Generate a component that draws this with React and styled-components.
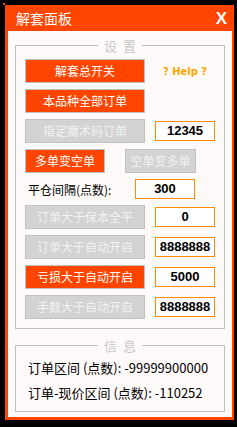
import React from "react";
import styled, { createGlobalStyle } from "styled-components";

const GlobalStyle = createGlobalStyle`
  body {
    margin: 0;
    background: #000;
    font-family: "Noto Sans CJK SC", "Noto Sans", sans-serif;
  }
`;

const Panel = styled.div`
  position: relative;
  box-sizing: border-box;
  margin: 5px 0 0 5px;
  width: 229px;
  height: 415px;
  padding: 0 2px 3px 3px;
  background: #ff4500;
  display: flex;
  flex-direction: column;
  &::before {
    content: "";
    position: absolute;
    left: -2px;
    top: -2px;
    width: 2px;
    height: 2px;
    background: #ff4500;
  }
`;

const TitleBar = styled.div`
  height: 26px;
  display: flex;
  align-items: center;
  justify-content: space-between;
  padding: 0 5px 0 8px;
  color: #fff;
`;

const Title = styled.span`
  font-size: 14px;
  line-height: 26px;
`;

const Close = styled.span`
  font-family: "Liberation Sans", Arial, sans-serif;
  font-weight: bold;
  font-size: 17px;
  line-height: 26px;
  padding-top: 1px;
`;

const Body = styled.div`
  flex: 1;
  background: #fffafa;
  padding: 7px 7px 0;
`;

const Group = styled.fieldset`
  margin: ${(p) => (p.$spaced ? "9px 0 0" : "0")};
  padding: ${(p) => p.$pad};
  border: 1px solid #c0c0c0;
  min-width: 0;
`;

const Legend = styled.legend`
  margin: 0 auto;
  padding: 0 6px;
  font-size: 13px;
  line-height: 15px;
  color: #c8c8c8;
  white-space: pre;
`;

const Stack = styled.div`
  display: flex;
  flex-direction: column;
  gap: 6px;
`;

const Row = styled.div`
  display: flex;
  align-items: center;
  gap: ${(p) => p.$gap || 10}px;
`;

const Button = styled.button`
  box-sizing: border-box;
  width: ${(p) => p.$w || 120}px;
  height: 24px;
  margin: 0;
  padding: 0;
  border: 1px solid #c0c0c0;
  background: ${(p) => (p.$on ? "#ff4500" : "#d3d3d3")};
  color: ${(p) => (p.$on ? "#fff" : "#f2f2f2")};
  font-family: "Noto Sans CJK SC", sans-serif;
  font-size: 12px;
  line-height: 22px;
`;

const Value = styled.div`
  box-sizing: border-box;
  width: 60px;
  height: 20px;
  border: 1px solid #ff8c00;
  background: #fff;
  color: #000;
  font-family: "Liberation Sans", Arial, sans-serif;
  font-weight: bold;
  font-size: 13px;
  line-height: 18px;
  text-align: center;
`;

const Help = styled.span`
  width: 60px;
  text-align: center;
  color: #ffa500;
  font-family: "DejaVu Sans Condensed", "Liberation Sans", sans-serif;
  font-weight: bold;
  font-size: 11px;
`;

const Label = styled.span`
  width: 97px;
  padding-left: 3px;
  font-size: 12px;
  color: #000;
  line-height: 19px;
`;

const Line = styled.div`
  font-size: 13px;
  line-height: 25px;
  color: #000;
`;

const valueRows = [
  { text: "订单大于保本全平", on: false, value: "0" },
  { text: "订单大于自动开启", on: false, value: "8888888" },
  { text: "亏损大于自动开启", on: true, value: "5000" },
  { text: "手数大于自动开启", on: false, value: "8888888" },
];

const App = () => {
  return (
    <>
      <GlobalStyle />
      <Panel>
        <TitleBar>
          <Title>解套面板</Title>
          <Close>X</Close>
        </TitleBar>
        <Body>
          <Group $pad="6px 9px 9px">
            <Legend>{"设  置"}</Legend>
            <Stack>
              <Row>
                <Button $on>解套总开关</Button>
                <Help>? Help ?</Help>
              </Row>
              <Row>
                <Button $on>本品种全部订单</Button>
              </Row>
              <Row>
                <Button>指定魔术码订单</Button>
                <Value>12345</Value>
              </Row>
              <Row $gap={20}>
                <Button $on $w={80}>多单变空单</Button>
                <Button $w={71}>空单变多单</Button>
              </Row>
              <Row $gap={0}>
                <Label>平仓间隔(点数):</Label>
                <Value>300</Value>
              </Row>
              {valueRows.map((r) => (
                <Row key={r.text}>
                  <Button $on={r.on}>{r.text}</Button>
                  <Value>{r.value}</Value>
                </Row>
              ))}
            </Stack>
          </Group>
          <Group $spaced $pad="2px 12px 6px">
            <Legend>{"信  息"}</Legend>
            <Line>订单区间 (点数): -99999900000</Line>
            <Line>订单-现价区间 (点数): -110252</Line>
          </Group>
        </Body>
      </Panel>
    </>
  );
};

export default App;
